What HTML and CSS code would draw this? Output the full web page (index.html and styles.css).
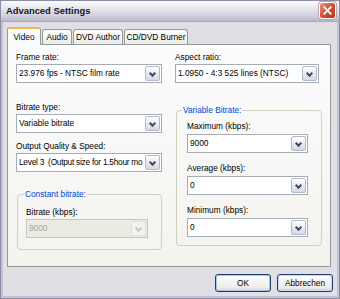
FILE: index.html
```html
<!DOCTYPE html>
<html lang="de">
<head>
  <meta charset="UTF-8" />
  <title>Advanced Settings</title>
  <link rel="stylesheet" href="styles.css">
</head>
<body>
  <div class="window">
    <div class="titlebar">
      <span class="title">Advanced Settings</span>
      <span class="close">
        <svg viewBox="0 0 10 10"><path d="M2 2l6 6M8 2l-6 6" stroke="#fff" stroke-width="1.6" stroke-linecap="round"/></svg>
      </span>
    </div>
    <div class="client">
      <div class="tabs">
        <span class="tab active">Video</span>
        <span class="tab">Audio</span>
        <span class="tab">DVD Author</span>
        <span class="tab">CD/DVD Burner</span>
      </div>
      <div class="panel">
        <div class="col">
          <div class="label">Frame rate:</div>
          <div class="combo"><span class="value">23.976 fps - NTSC film rate</span><span class="drop"></span></div>
          <div class="label gap-lg">Bitrate type:</div>
          <div class="combo"><span class="value">Variable bitrate</span><span class="drop"></span></div>
          <div class="label">Output Quality &amp; Speed:</div>
          <div class="combo"><span class="value tight">Level 3&nbsp;&nbsp;(Output size for 1.5hour mo</span><span class="drop"></span></div>
          <fieldset class="group left-group">
            <legend>Constant bitrate:</legend>
            <div class="label">Bitrate (kbps):</div>
            <div class="combo disabled"><span class="value">9000</span><span class="drop"></span></div>
          </fieldset>
        </div>
        <div class="col">
          <div class="label">Aspect ratio:</div>
          <div class="combo narrow"><span class="value">1.0950 - 4:3 525 lines (NTSC)</span><span class="drop"></span></div>
          <fieldset class="group right-group">
            <legend>Variable Bitrate:</legend>
            <div class="label">Maximum (kbps):</div>
            <div class="combo"><span class="value">9000</span><span class="drop"></span></div>
            <div class="label">Average (kbps):</div>
            <div class="combo"><span class="value">0</span><span class="drop"></span></div>
            <div class="label">Minimum (kbps):</div>
            <div class="combo"><span class="value">0</span><span class="drop"></span></div>
          </fieldset>
        </div>
      </div>
      <div class="actions">
        <span class="btn default">OK</span>
        <span class="btn">Abbrechen</span>
      </div>
    </div>
  </div>
</body>
</html>
```

FILE: styles.css
```css
* {
  box-sizing: border-box;
}
html, body {
  margin: 0;
  padding: 0;
  background: #e0dfe3;
  font-family: "Liberation Sans", Arial, sans-serif;
  font-size: 8.3px;
  color: #000;
}
.window {
  width: 340px;
  height: 299px;
  display: flex;
  flex-direction: column;
  background: #e0dfe3;
  border: 3px solid #c3c2d4;
  border-top: none;
  outline: 1px solid #8e8da6;
  outline-offset: -1px;
}
.titlebar {
  height: 22px;
  margin: 0 -3px;
  display: flex;
  align-items: center;
  justify-content: space-between;
  padding: 0 4px 0 6px;
  background: linear-gradient(#ffffff 0%, #e8e8f0 35%, #d6d6e2 70%, #b9b8cc 100%);
  border-bottom: 1px solid #a9a8bf;
  border-radius: 5px 5px 0 0;
}
.title {
  font-weight: bold;
  font-size: 9.4px;
  color: #14142a;
}
.close {
  width: 17px;
  height: 17px;
  display: flex;
  align-items: center;
  justify-content: center;
  border: 1px solid #fff;
  border-radius: 3px;
  background: linear-gradient(135deg, #e89a82 0%, #d8533a 45%, #b63314 100%);
  box-shadow: 0 0 0 1px #b8a6b0;
}
.close svg {
  width: 11px;
  height: 11px;
}
.client {
  flex: 1;
  display: flex;
  flex-direction: column;
  padding: 5px 6px 4px 4px;
}
.tabs {
  display: flex;
  align-items: flex-end;
  height: 17px;
  position: relative;
  z-index: 1;
}
.tab {
  height: 15px;
  margin-right: 1px;
  display: flex;
  align-items: center;
  justify-content: center;
  white-space: nowrap;
  border: 1px solid #919b9c;
  border-bottom: none;
  border-radius: 3px 3px 0 0;
  background: linear-gradient(#fefefe, #ecebe6);
}
.tab:nth-child(2) { width: 30px; }
.tab:nth-child(3) { width: 50px; }
.tab:nth-child(4) { width: 64px; }
.tab.active {
  width: 34px;
  height: 18px;
  margin-bottom: -1px;
  border-top: 2px solid #f5b74a;
  background: #fcfcfe;
}
.panel {
  flex: 1;
  display: grid;
  grid-template-columns: 146px 147px;
  column-gap: 13px;
  padding: 7px 0 0 8px;
  border: 1px solid #919b9c;
  background: linear-gradient(#fcfcfe, #f4f3ee);
}
.col {
  display: flex;
  flex-direction: column;
}
.label {
  height: 10px;
  line-height: 10px;
  margin-bottom: 2px;
  white-space: nowrap;
}
.gap-lg {
  margin-top: 11px;
}
.combo {
  height: 19px;
  display: flex;
  align-items: stretch;
  border: 1px solid #a5acb5;
  background: #fff;
  margin-bottom: 8px;
}
.combo .value {
  flex: 1;
  min-width: 0;
  white-space: nowrap;
  line-height: 17px;
  padding-left: 2px;
}
.combo .tight {
  letter-spacing: -0.25px;
}
.drop {
  flex: none;
  width: 15px;
  margin: 1px;
  border: 1px solid #b4b9c9;
  border-radius: 2px;
  background: linear-gradient(#ffffff, #d7d8e4);
  position: relative;
}
.drop::after {
  content: "";
  position: absolute;
  left: 4px;
  top: 4px;
  width: 3px;
  height: 3px;
  border-right: 2px solid #3e4a66;
  border-bottom: 2px solid #3e4a66;
  transform: rotate(45deg);
}
.narrow {
  margin-right: 3px;
}
.group {
  margin: 0;
  border: 1px solid #d0d0bf;
  border-radius: 4px;
}
.group legend {
  color: #0046d5;
  padding: 0 1px;
  line-height: 10px;
}
.left-group {
  margin-top: 9px;
  margin-left: 1px;
  padding: 8px 13px 7px 8px;
}
.left-group legend {
  margin-left: -2px;
}
.right-group {
  margin-top: 14px;
  margin-left: 1px;
  padding: 6px 13px 4px 10px;
}
.right-group legend {
  margin-left: -5px;
}
.right-group .label {
  margin-bottom: 3px;
}
.right-group .combo {
  margin-bottom: 10px;
}
.right-group .combo:last-child {
  margin-bottom: 4px;
}
.combo.disabled {
  background: #ebebe4;
  border-color: #c9c7ba;
  color: #a4a49a;
  margin-bottom: 4px;
}
.combo.disabled .drop {
  border-color: #e0e0da;
  background: #f2f2ee;
}
.combo.disabled .drop::after {
  border-color: #c6c6c0;
}
.actions {
  display: flex;
  justify-content: flex-end;
  gap: 6px;
  padding-top: 7px;
  margin-right: -2px;
}
.btn {
  width: 56px;
  height: 18px;
  display: flex;
  align-items: center;
  justify-content: center;
  border: 1px solid #1f3c6e;
  border-radius: 3px;
  background: linear-gradient(#ffffff, #ecebe6 80%, #d6d0c5);
  box-shadow: inset 0 0 0 1px #c8d8f0;
}
.btn.default {
  box-shadow: inset 0 0 0 1px #aac4ee;
}
```
